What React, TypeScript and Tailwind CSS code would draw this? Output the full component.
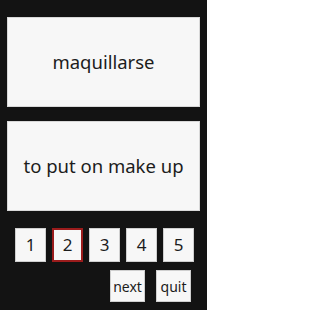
import React from 'react';

const font = { fontFamily: '"Noto Sans", "Open Sans", sans-serif' };

const Card: React.FC<{ text: string }> = ({ text }) => (
  <div className="h-[90px] w-full bg-[#f7f7f7] border border-[#d8d8d8] flex items-center justify-center text-[18.5px] text-[#1c1c1c]">
    {text}
  </div>
);

const App: React.FC = () => {
  const picked = 2;

  return (
    <div className="w-[207px] h-[310px] bg-[#131313] flex flex-col pt-[17px] px-[7px]" style={font}>
      <Card text="maquillarse" />
      <div className="h-[14px]" />
      <Card text="to put on make up" />
      <div className="mt-[17px] flex gap-[6px] pl-[8px]">
        {[1, 2, 3, 4, 5].map((n) => (
          <div
            key={n}
            className={
              n === picked
                ? 'w-[31px] h-[34px] bg-[#f7f7f7] border-2 border-[#9b1c1c] flex items-center justify-center text-[17px] text-[#1c1c1c]'
                : 'w-[31px] h-[34px] bg-[#f7f7f7] border border-[#cfcfcf] flex items-center justify-center text-[17px] text-[#1c1c1c]'
            }
          >
            {n}
          </div>
        ))}
      </div>
      <div className="mt-[8px] flex justify-end gap-[11px] pr-[9px]">
        <div className="w-[35px] h-[32px] bg-[#f7f7f7] border border-[#cfcfcf] flex items-center justify-center text-[14px] text-[#1c1c1c]">
          next
        </div>
        <div className="w-[35px] h-[32px] bg-[#f7f7f7] border border-[#cfcfcf] flex items-center justify-center text-[14px] text-[#1c1c1c]">
          quit
        </div>
      </div>
    </div>
  );
};

export default App;
